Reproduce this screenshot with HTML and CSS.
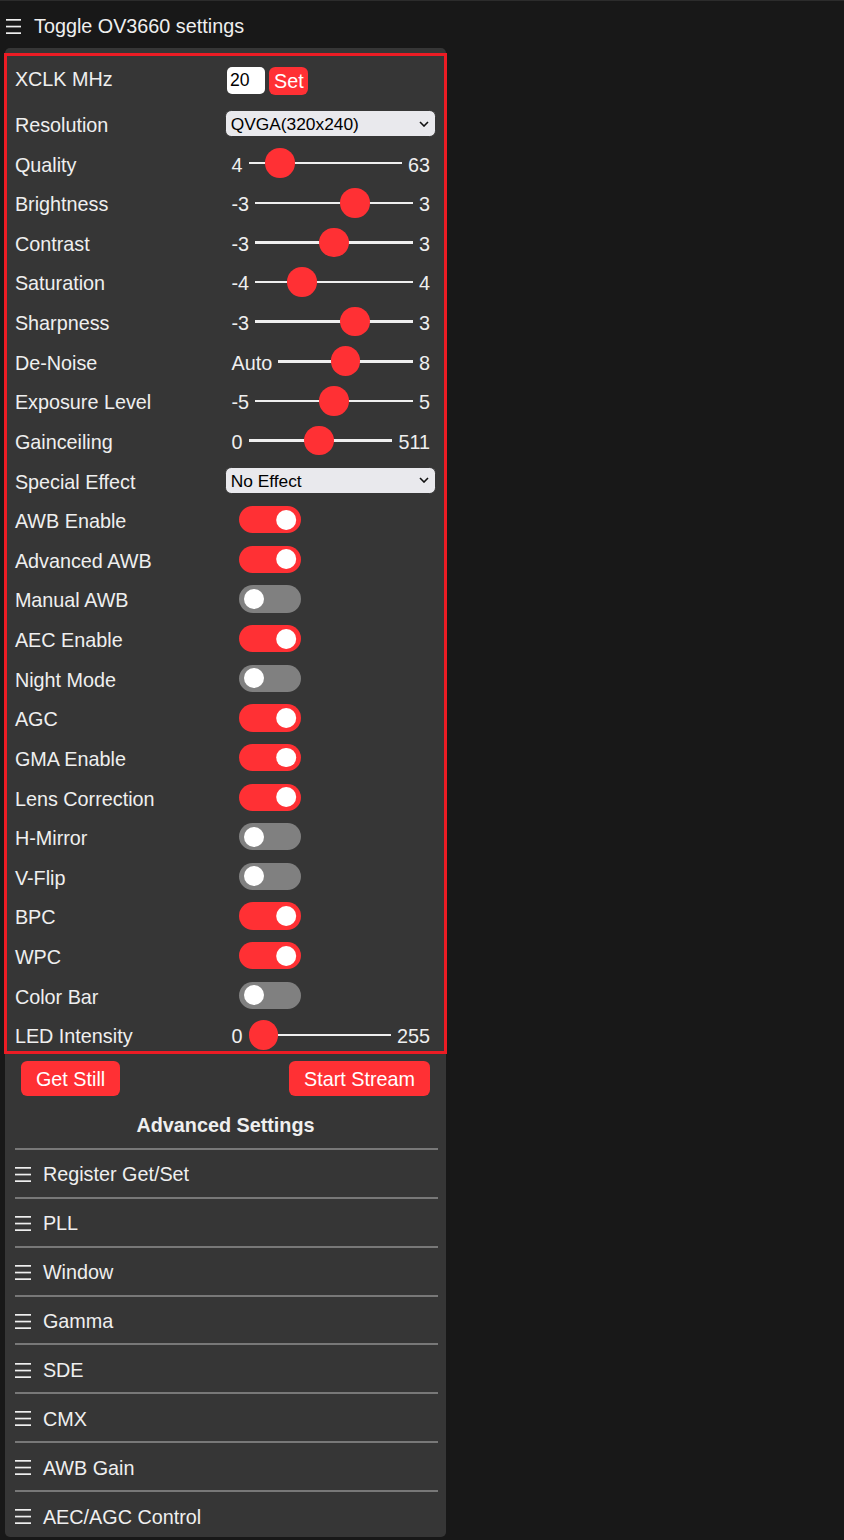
FILE: index.html
```html
<!DOCTYPE html>
<html lang="en">
<head>
<meta charset="utf-8">
<title>OV3660 Camera Settings</title>
<link rel="stylesheet" href="styles.css">
</head>
<body>
<section class="main">
  <div class="logo">
    <label class="nav-toggle">
      <svg class="burger burger-top" viewBox="0 0 15 15" aria-hidden="true">
        <rect x="0" y="0" width="15" height="1.7"/>
        <rect x="0" y="6.7" width="15" height="1.7"/>
        <rect x="0" y="13.3" width="15" height="1.7"/>
      </svg>
      <span>Toggle OV3660 settings</span>
    </label>
  </div>

  <nav class="menu">
    <div class="settings">
      <div class="input-group xclk-group">
        <label for="xclk">XCLK MHz</label>
        <div class="text"><input id="xclk" class="xclk-input" type="text" maxlength="2" size="2" value="20"></div>
        <button class="inline-button">Set</button>
      </div>

      <div class="input-group">
        <label for="framesize">Resolution</label>
        <div class="select-wrap">
          <select id="framesize">
            <option value="13">UXGA(1600x1200)</option>
            <option value="12">SXGA(1280x1024)</option>
            <option value="11">HD(1280x720)</option>
            <option value="10">XGA(1024x768)</option>
            <option value="9">SVGA(800x600)</option>
            <option value="8">VGA(640x480)</option>
            <option value="7">HVGA(480x320)</option>
            <option value="6">CIF(400x296)</option>
            <option value="5" selected>QVGA(320x240)</option>
            <option value="4">240x240</option>
            <option value="3">HQVGA(240x176)</option>
            <option value="2">QCIF(176x144)</option>
            <option value="1">QQVGA(160x120)</option>
            <option value="0">96x96</option>
          </select>
          <svg class="chevron" viewBox="0 0 10 6" aria-hidden="true"><polyline points="1,1 5,5 9,1"/></svg>
        </div>
      </div>

      <div class="input-group">
        <label for="quality">Quality</label>
        <div class="range-min">4</div>
        <input type="range" id="quality" min="4" max="63" value="12">
        <div class="range-max">63</div>
      </div>

      <div class="input-group">
        <label for="brightness">Brightness</label>
        <div class="range-min">-3</div>
        <input type="range" id="brightness" min="-3" max="3" value="1">
        <div class="range-max">3</div>
      </div>

      <div class="input-group">
        <label for="contrast">Contrast</label>
        <div class="range-min">-3</div>
        <input type="range" id="contrast" min="-3" max="3" value="0">
        <div class="range-max">3</div>
      </div>

      <div class="input-group">
        <label for="saturation">Saturation</label>
        <div class="range-min">-4</div>
        <input type="range" id="saturation" min="-4" max="4" value="-2">
        <div class="range-max">4</div>
      </div>

      <div class="input-group">
        <label for="sharpness">Sharpness</label>
        <div class="range-min">-3</div>
        <input type="range" id="sharpness" min="-3" max="3" value="1">
        <div class="range-max">3</div>
      </div>

      <div class="input-group">
        <label for="denoise">De-Noise</label>
        <div class="range-min">Auto</div>
        <input type="range" id="denoise" min="0" max="8" value="4">
        <div class="range-max">8</div>
      </div>

      <div class="input-group">
        <label for="ae_level">Exposure Level</label>
        <div class="range-min">-5</div>
        <input type="range" id="ae_level" min="-5" max="5" value="0">
        <div class="range-max">5</div>
      </div>

      <div class="input-group">
        <label for="gainceiling">Gainceiling</label>
        <div class="range-min">0</div>
        <input type="range" id="gainceiling" min="0" max="511" value="248">
        <div class="range-max">511</div>
      </div>

      <div class="input-group">
        <label for="special_effect">Special Effect</label>
        <div class="select-wrap">
          <select id="special_effect">
            <option value="0" selected>No Effect</option>
            <option value="1">Negative</option>
            <option value="2">Grayscale</option>
            <option value="3">Red Tint</option>
            <option value="4">Green Tint</option>
            <option value="5">Blue Tint</option>
            <option value="6">Sepia</option>
          </select>
          <svg class="chevron" viewBox="0 0 10 6" aria-hidden="true"><polyline points="1,1 5,5 9,1"/></svg>
        </div>
      </div>

      <div class="input-group">
        <label for="awb">AWB Enable</label>
        <div class="switch"><input id="awb" type="checkbox" checked><label class="slider" for="awb"></label></div>
      </div>
      <div class="input-group">
        <label for="dcw">Advanced AWB</label>
        <div class="switch"><input id="dcw" type="checkbox" checked><label class="slider" for="dcw"></label></div>
      </div>
      <div class="input-group">
        <label for="awb_gain">Manual AWB</label>
        <div class="switch"><input id="awb_gain" type="checkbox"><label class="slider" for="awb_gain"></label></div>
      </div>
      <div class="input-group">
        <label for="aec">AEC Enable</label>
        <div class="switch"><input id="aec" type="checkbox" checked><label class="slider" for="aec"></label></div>
      </div>
      <div class="input-group">
        <label for="night">Night Mode</label>
        <div class="switch"><input id="night" type="checkbox"><label class="slider" for="night"></label></div>
      </div>
      <div class="input-group">
        <label for="agc">AGC</label>
        <div class="switch"><input id="agc" type="checkbox" checked><label class="slider" for="agc"></label></div>
      </div>
      <div class="input-group">
        <label for="raw_gma">GMA Enable</label>
        <div class="switch"><input id="raw_gma" type="checkbox" checked><label class="slider" for="raw_gma"></label></div>
      </div>
      <div class="input-group">
        <label for="lenc">Lens Correction</label>
        <div class="switch"><input id="lenc" type="checkbox" checked><label class="slider" for="lenc"></label></div>
      </div>
      <div class="input-group">
        <label for="hmirror">H-Mirror</label>
        <div class="switch"><input id="hmirror" type="checkbox"><label class="slider" for="hmirror"></label></div>
      </div>
      <div class="input-group">
        <label for="vflip">V-Flip</label>
        <div class="switch"><input id="vflip" type="checkbox"><label class="slider" for="vflip"></label></div>
      </div>
      <div class="input-group">
        <label for="bpc">BPC</label>
        <div class="switch"><input id="bpc" type="checkbox" checked><label class="slider" for="bpc"></label></div>
      </div>
      <div class="input-group">
        <label for="wpc">WPC</label>
        <div class="switch"><input id="wpc" type="checkbox" checked><label class="slider" for="wpc"></label></div>
      </div>
      <div class="input-group">
        <label for="colorbar">Color Bar</label>
        <div class="switch"><input id="colorbar" type="checkbox"><label class="slider" for="colorbar"></label></div>
      </div>

      <div class="input-group">
        <label for="led_intensity">LED Intensity</label>
        <div class="range-min">0</div>
        <input type="range" id="led_intensity" min="0" max="255" value="0">
        <div class="range-max">255</div>
      </div>
    </div>

    <section class="buttons">
      <button class="button" id="get-still">Get Still</button>
      <button class="button" id="toggle-stream">Start Stream</button>
    </section>

    <div class="adv-title">Advanced Settings</div>

    <div class="adv-list">
      <div class="adv-item">
        <svg class="burger burger-item" viewBox="0 0 16 15" aria-hidden="true"><rect x="0" y="0" width="16" height="1.7"/><rect x="0" y="6.7" width="16" height="1.7"/><rect x="0" y="13.3" width="16" height="1.7"/></svg>
        <span>Register Get/Set</span>
      </div>
      <div class="adv-item">
        <svg class="burger burger-item" viewBox="0 0 16 15" aria-hidden="true"><rect x="0" y="0" width="16" height="1.7"/><rect x="0" y="6.7" width="16" height="1.7"/><rect x="0" y="13.3" width="16" height="1.7"/></svg>
        <span>PLL</span>
      </div>
      <div class="adv-item">
        <svg class="burger burger-item" viewBox="0 0 16 15" aria-hidden="true"><rect x="0" y="0" width="16" height="1.7"/><rect x="0" y="6.7" width="16" height="1.7"/><rect x="0" y="13.3" width="16" height="1.7"/></svg>
        <span>Window</span>
      </div>
      <div class="adv-item">
        <svg class="burger burger-item" viewBox="0 0 16 15" aria-hidden="true"><rect x="0" y="0" width="16" height="1.7"/><rect x="0" y="6.7" width="16" height="1.7"/><rect x="0" y="13.3" width="16" height="1.7"/></svg>
        <span>Gamma</span>
      </div>
      <div class="adv-item">
        <svg class="burger burger-item" viewBox="0 0 16 15" aria-hidden="true"><rect x="0" y="0" width="16" height="1.7"/><rect x="0" y="6.7" width="16" height="1.7"/><rect x="0" y="13.3" width="16" height="1.7"/></svg>
        <span>SDE</span>
      </div>
      <div class="adv-item">
        <svg class="burger burger-item" viewBox="0 0 16 15" aria-hidden="true"><rect x="0" y="0" width="16" height="1.7"/><rect x="0" y="6.7" width="16" height="1.7"/><rect x="0" y="13.3" width="16" height="1.7"/></svg>
        <span>CMX</span>
      </div>
      <div class="adv-item">
        <svg class="burger burger-item" viewBox="0 0 16 15" aria-hidden="true"><rect x="0" y="0" width="16" height="1.7"/><rect x="0" y="6.7" width="16" height="1.7"/><rect x="0" y="13.3" width="16" height="1.7"/></svg>
        <span>AWB Gain</span>
      </div>
      <div class="adv-item">
        <svg class="burger burger-item" viewBox="0 0 16 15" aria-hidden="true"><rect x="0" y="0" width="16" height="1.7"/><rect x="0" y="6.7" width="16" height="1.7"/><rect x="0" y="13.3" width="16" height="1.7"/></svg>
        <span>AEC/AGC Control</span>
      </div>
    </div>
  </nav>
</section>
</body>
</html>
```

FILE: styles.css
```css
* {
  box-sizing: border-box;
}

html,
body {
  margin: 0;
  background: #181818;
}

body {
  min-height: 1540px;
  border-top: 1px solid #2c2c2c;
  font-family: "Liberation Sans", Arial, Helvetica, sans-serif;
  font-size: 19.8px;
  color: #efefef;
}

.main {
  display: flex;
  flex-direction: column;
  align-items: flex-start;
}

/* top toggle line */
.logo {
  height: 47px;
  padding-top: 3px;
  display: flex;
  align-items: center;
}

.nav-toggle {
  display: flex;
  align-items: center;
  gap: 13px;
  padding-left: 6px;
  line-height: 23px;
  cursor: pointer;
}

.burger {
  display: block;
  flex: none;
  fill: #efefef;
}

.burger-top {
  width: 15px;
  height: 15px;
}

.burger-item {
  width: 16px;
  height: 15px;
  margin-top: -1px;
}

/* settings panel */
.menu {
  display: flex;
  flex-direction: column;
  width: 441px;
  margin-left: 5px;
  padding: 9.9px 9.9px 6.4px;
  background: #363636;
  border-radius: 5px;
}

.settings {
  position: relative;
  display: flex;
  flex-direction: column;
}

/* highlight frame drawn over the settings block */
.settings::after {
  content: "";
  position: absolute;
  top: -5px;
  bottom: 1.2px;
  left: -11px;
  right: -11px;
  border: 3px solid #ec1c24;
  pointer-events: none;
}

.input-group {
  display: flex;
  flex-wrap: nowrap;
  line-height: 27.25px;
  margin: 6.2px 0;
}

/* text cells sit a touch low in their 27px line */
.input-group > label,
.range-min,
.range-max {
  padding-top: 3px;
  line-height: 24.25px;
}

.input-group > label {
  box-sizing: content-box;
  display: inline-block;
  min-width: 47%;
  padding-right: 12.4px;
}

.range-min,
.range-max {
  display: inline-block;
  padding-left: 6.2px;
  padding-right: 6.2px;
}

/* XCLK input + set button */
.xclk-input {
  display: block;
  width: 38px;
  height: 27px;
  margin: 2.9px 0 0 1.7px;
  padding: 1px 3px 0;
  border: 0;
  border-radius: 5px;
  background: #fff;
  color: #000;
  font-family: "Liberation Sans", Arial, sans-serif;
  font-size: 17.6px;
  outline: 0;
}

.inline-button {
  display: block;
  margin: 2.48px 2.48px 2.48px 4.5px;
  padding: 2.5px 4.5px 1.2px;
  border: 0;
  border-radius: 6.2px;
  line-height: 24.8px;
  background: #ff3034;
  color: #fff;
  font-family: "Liberation Sans", Arial, sans-serif;
  font-size: 19.8px;
  cursor: pointer;
}

/* dropdowns */
.select-wrap {
  position: relative;
  display: flex;
  flex: 1 1 0;
  min-width: 0;
}

.select-wrap select {
  flex: 1 1 auto;
  min-width: 0;
  -webkit-appearance: none;
  appearance: none;
  height: 27.25px;
  margin: 0;
  padding: 1px 24px 0 4.4px;
  border: 1.24px solid #363636;
  border-radius: 6.2px;
  background: #e9e9ed;
  color: #000;
  font-family: "Liberation Sans", Arial, sans-serif;
  font-size: 17.35px;
  outline: 0;
}

.chevron {
  position: absolute;
  right: 7px;
  top: 50%;
  width: 10px;
  height: 6px;
  margin-top: -3px;
  fill: none;
  stroke: #111;
  stroke-width: 1.6;
  pointer-events: none;
}

/* range sliders */
input[type=range] {
  -webkit-appearance: none;
  appearance: none;
  flex: 1 1 0;
  min-width: 0;
  height: 27.25px;
  margin: 0;
  background: #363636;
  cursor: pointer;
}

input[type=range]:focus {
  outline: 0;
}

input[type=range]::-webkit-slider-runnable-track {
  height: 2.5px;
  background: #efefef;
  border: 0;
  border-radius: 0;
}

input[type=range]::-webkit-slider-thumb {
  -webkit-appearance: none;
  box-sizing: border-box;
  width: 29.7px;
  height: 29.7px;
  margin-top: -13.6px;
  border: 0;
  border-radius: 50%;
  background: #ff3034;
  cursor: pointer;
}

/* toggle switches */
.switch {
  display: flex;
  align-items: center;
  height: 27.25px;
}

.switch input {
  width: 0;
  height: 0;
  margin: 0;
  opacity: 0;
  outline: 0;
}

.slider {
  display: block;
  width: 62px;
  height: 27.25px;
  margin-left: 13.6px;
  border-radius: 27.25px;
  background-color: #808080;
  cursor: pointer;
}

.slider::before {
  content: "";
  display: block;
  width: 19.8px;
  height: 19.8px;
  margin: 3.72px 0 0 4.95px;
  border-radius: 50%;
  background-color: #fff;
}

.switch input:checked + .slider {
  background-color: #ff3034;
}

.switch input:checked + .slider::before {
  transform: translateX(32.2px);
}

/* action buttons */
.buttons {
  display: flex;
  flex-wrap: nowrap;
  justify-content: space-between;
}

.button {
  display: block;
  margin: 6.2px;
  padding: 2.5px 14.9px 0;
  border: 0;
  border-radius: 6.2px;
  line-height: 32.2px;
  background: #ff3034;
  color: #fff;
  font-family: "Liberation Sans", Arial, sans-serif;
  font-size: 19.8px;
  cursor: pointer;
}

/* advanced sections */
.adv-title {
  margin: 12.4px 0 10.6px;
  line-height: 22.8px;
  font-weight: bold;
  text-align: center;
}

.adv-list {
  display: flex;
  flex-direction: column;
  gap: 8.35px;
  margin-right: -2px;
}

.adv-item {
  display: flex;
  align-items: center;
  gap: 12px;
  padding-top: 11.4px;
  border-top: 2px solid #787878;
  line-height: 27.25px;
  cursor: pointer;
}
```
